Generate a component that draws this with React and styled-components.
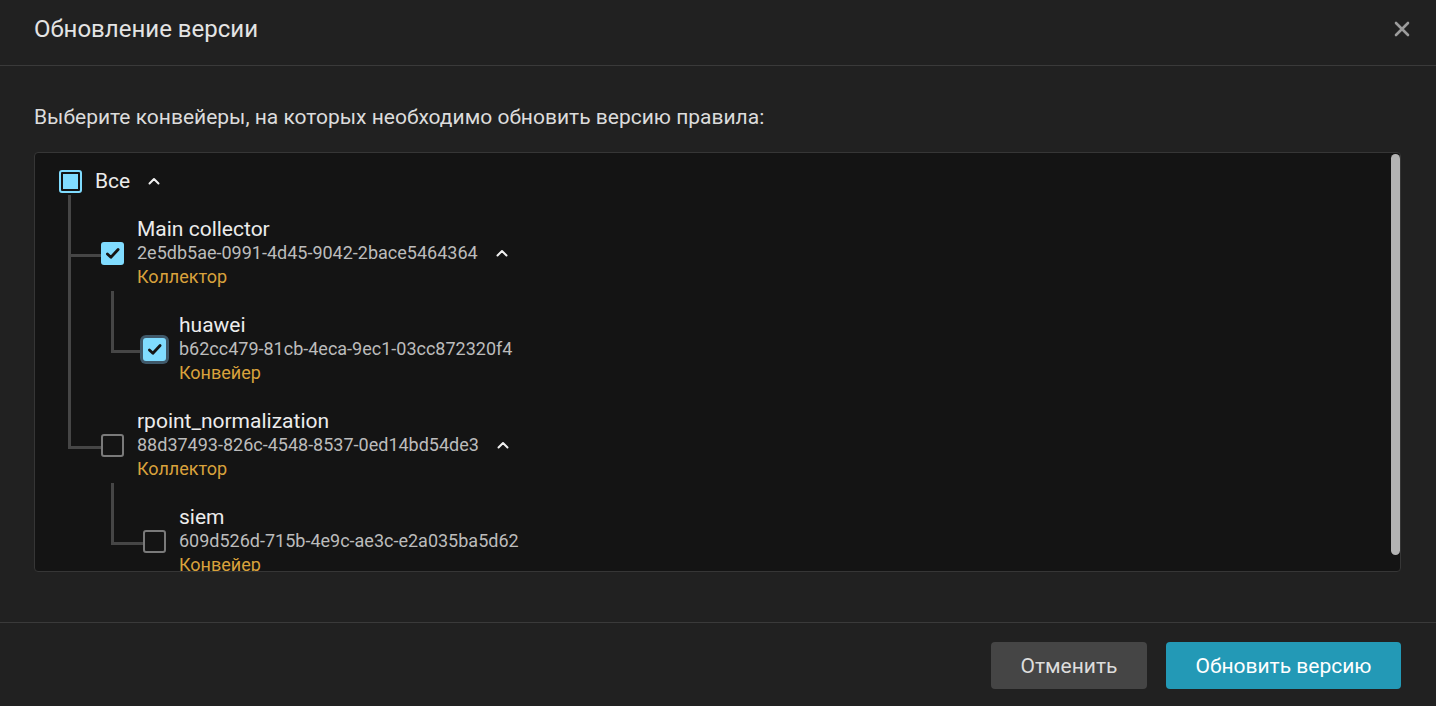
import React from "react"
import styled, { createGlobalStyle, css } from "styled-components"

const GlobalStyle = createGlobalStyle`
  html, body {
    margin: 0;
    padding: 0;
    background: #212121;
  }
  * {
    box-sizing: border-box;
  }
`;

const Dialog = styled.div`
  display: flex;
  flex-direction: column;
  height: 706px;
  background: #212121;
  color: #e6e6e6;
  font-family: Roboto, "Noto Sans", sans-serif;
`;

const Header = styled.div`
  height: 66px;
  flex-shrink: 0;
  display: flex;
  align-items: center;
  justify-content: space-between;
  padding: 0 26px 8px 34px;
  border-bottom: 1px solid #3a3a3a;
`;

const Title = styled.h1`
  margin: 0;
  font-size: 24px;
  font-weight: 400;
  color: #e4e4e4;
`;

const CloseButton = styled.button`
  border: none;
  background: none;
  padding: 0;
  width: 16px;
  height: 16px;
  display: flex;
  cursor: pointer;
`;

const Body = styled.div`
  flex: 1;
  padding: 39px 35px 0 34px;
`;

const Subtitle = styled.p`
  margin: 0 0 23px;
  font-size: 21px;
  line-height: 24px;
  color: #dcdcdc;
`;

const TreeBox = styled.div`
  position: relative;
  height: 420px;
  background: #141414;
  border: 1px solid #363636;
  border-radius: 4px;
  overflow: hidden;
`;

const ScrollArea = styled.div`
  height: 100%;
  overflow: hidden;
  padding: 16px 24px 16px;
`;

const ScrollThumb = styled.div`
  position: absolute;
  top: 1px;
  right: 0;
  width: 9px;
  height: ${(p) => p.$size}px;
  border-radius: 5px;
  background: #b4b4b4;
`;

const Column = styled.div`
  display: flex;
  flex-direction: column;
  gap: 24px;
`;

const ChildList = styled.div`
  display: flex;
  flex-direction: column;
  gap: 24px;
  margin-left: ${(p) => p.$indent}px;
`;

const Item = styled.div`
  position: relative;
  display: flex;
  flex-direction: column;
  gap: 24px;
  padding-left: ${(p) => p.$pad}px;

  &::before {
    content: "";
    position: absolute;
    left: 0;
    top: -22px;
    width: ${(p) => p.$pad - 1}px;
    height: 59px;
    border-left: 3px solid #464646;
    border-bottom: 3px solid #464646;
  }

  &:not(:last-child)::after {
    content: "";
    position: absolute;
    left: 0;
    top: 0;
    bottom: -24px;
    border-left: 3px solid #464646;
  }
`;

const NodeRow = styled.div`
  display: flex;
  align-items: center;
  gap: 13px;
`;

const Box = styled.span`
  position: relative;
  z-index: 1;
  width: 23px;
  height: 23px;
  flex-shrink: 0;
  border-radius: 3px;
  display: flex;
  align-items: center;
  justify-content: center;
  ${(p) =>
    p.$state === "checked" &&
    css`
      background: #80dcff;
    `}
  ${(p) =>
    p.$state === "empty" &&
    css`
      border: 2px solid #7a7a7a;
      background: #141414;
    `}
  ${(p) =>
    p.$state === "partial" &&
    css`
      border: 2px solid #80dcff;
      padding: 2px;
    `}
  ${(p) =>
    p.$focused &&
    css`
      box-shadow: 0 0 0 3px #3f5869;
    `}
`;

const PartialFill = styled.span`
  display: block;
  width: 100%;
  height: 100%;
  background: #80dcff;
`;

const RootLabel = styled.span`
  font-size: 21px;
  line-height: 24px;
  color: #ececec;
  margin-right: 5px;
`;

const Info = styled.div`
  display: flex;
  flex-direction: column;
`;

const Name = styled.span`
  font-size: 21px;
  line-height: 24px;
  color: #ececec;
`;

const IdLine = styled.span`
  display: flex;
  align-items: center;
  gap: 18px;
  font-size: 18px;
  line-height: 24px;
  color: #bcbcbc;
`;

const Kind = styled.span`
  font-size: 18px;
  line-height: 24px;
  color: #d9a23c;
`;

const Footer = styled.div`
  flex-shrink: 0;
  display: flex;
  justify-content: flex-end;
  gap: 19px;
  padding: 19px 35px 17px;
  border-top: 1px solid #3a3a3a;
`;

const Button = styled.button`
  height: 47px;
  border: none;
  border-radius: 4px;
  padding: 0 29px;
  font-family: Roboto, "Noto Sans", sans-serif;
  font-size: 21px;
  cursor: pointer;
  min-width: ${(p) => p.$width}px;
  background: ${(p) => (p.$primary ? "#2399b6" : "#454545")};
  color: ${(p) => (p.$primary ? "#ffffff" : "#dddddd")};
`;

const Check = () => (
  <svg width="17" height="17" viewBox="0 0 17 17">
    <path d="M3.4 8.9l3.5 3.4 7.2-7.8" fill="none" stroke="#151515" strokeWidth="2.8" strokeLinecap="round" strokeLinejoin="round" />
  </svg>
);

const Chevron = () => (
  <svg width="12" height="8" viewBox="0 0 12 8">
    <path d="M1.5 6.5L6 2l4.5 4.5" fill="none" stroke="#f0f0f0" strokeWidth="2" strokeLinecap="round" strokeLinejoin="round" />
  </svg>
);

const CheckBox = ({ state, focused }) => (
  <Box $state={state} $focused={focused}>
    {state === "checked" && <Check />}
    {state === "partial" && <PartialFill />}
  </Box>
);

const tree = [
  {
    name: "Main collector",
    id: "2e5db5ae-0991-4d45-9042-2bace5464364",
    kind: "Коллектор",
    state: "checked",
    children: [
      { name: "huawei", id: "b62cc479-81cb-4eca-9ec1-03cc872320f4", kind: "Конвейер", state: "checked", focused: true },
    ],
  },
  {
    name: "rpoint_normalization",
    id: "88d37493-826c-4548-8537-0ed14bd54de3",
    kind: "Коллектор",
    state: "empty",
    children: [
      { name: "siem", id: "609d526d-715b-4e9c-ae3c-e2a035ba5d62", kind: "Конвейер", state: "empty" },
    ],
  },
];

const Node = ({ node, pad }) => (
  <Item $pad={pad}>
    <NodeRow>
      <CheckBox state={node.state} focused={node.focused} />
      <Info>
        <Name>{node.name}</Name>
        <IdLine>
          {node.id}
          {node.children && <Chevron />}
        </IdLine>
        <Kind>{node.kind}</Kind>
      </Info>
    </NodeRow>
    {node.children && (
      <ChildList $indent={10}>
        {node.children.map((c) => (
          <Node key={c.id} node={c} pad={32} />
        ))}
      </ChildList>
    )}
  </Item>
);

const App = () => {
  return (
    <>
      <GlobalStyle />
      <Dialog>
        <Header>
          <Title>Обновление версии</Title>
          <CloseButton aria-label="close">
            <svg width="16" height="16" viewBox="0 0 16 16">
              <path d="M2 2l12 12M14 2L2 14" stroke="#9c9c9c" strokeWidth="2.6" strokeLinecap="round" />
            </svg>
          </CloseButton>
        </Header>
        <Body>
          <Subtitle>Выберите конвейеры, на которых необходимо обновить версию правила:</Subtitle>
          <TreeBox>
            <ScrollArea>
              <Column>
                <NodeRow>
                  <CheckBox state="partial" />
                  <RootLabel>Все</RootLabel>
                  <Chevron />
                </NodeRow>
                <ChildList $indent={9}>
                  {tree.map((n) => (
                    <Node key={n.id} node={n} pad={33} />
                  ))}
                </ChildList>
              </Column>
            </ScrollArea>
            <ScrollThumb $size={401} />
          </TreeBox>
        </Body>
        <Footer>
          <Button $width={156}>Отменить</Button>
          <Button $primary $width={235}>Обновить версию</Button>
        </Footer>
      </Dialog>
    </>
  )
}

export default App
